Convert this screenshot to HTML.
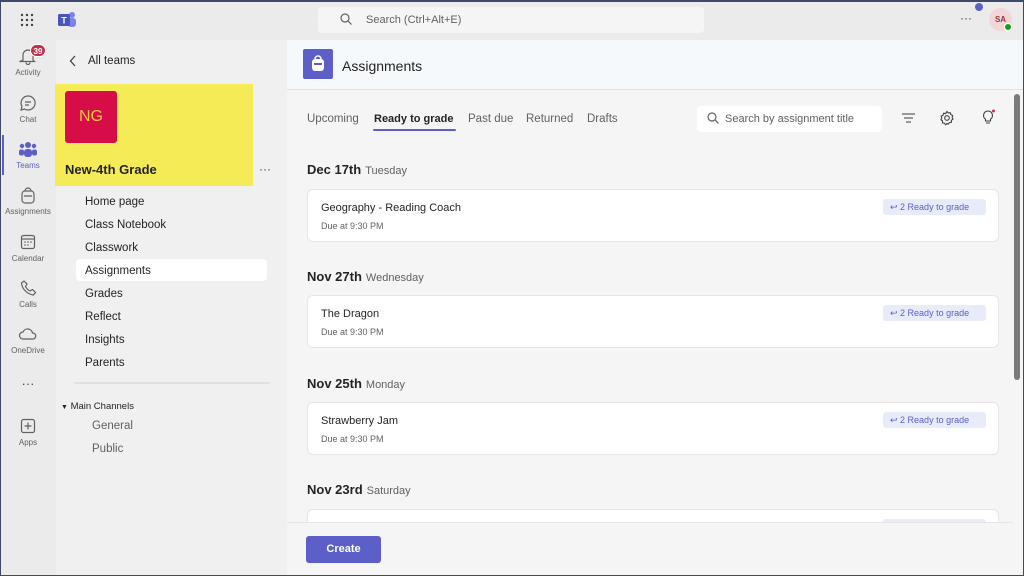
<!DOCTYPE html>
<html><head><style>
*{box-sizing:border-box;margin:0;padding:0}
body{width:1024px;height:576px;overflow:hidden;font-family:"Liberation Sans",sans-serif;background:#ebebeb;position:relative;color:#242424}
.frame{position:absolute;inset:0;border:1px solid #3d4a6a;border-top-width:2px;pointer-events:none;z-index:50}
.abs{position:absolute}
.top{left:0;top:0;width:1024px;height:40px;background:#ebebeb}
.search{left:318px;top:7px;width:386px;height:26px;background:#f5f5f5;border-radius:4px;font-size:11px;color:#616161;padding:7px 0 0 48px}
.rail{left:0;top:40px;width:56px;height:536px;background:#ebebeb}
.ri{position:absolute;left:0;width:56px;text-align:center;font-size:8px;color:#616161}
.ri svg{display:block;margin:0 auto 3px}
.panel{left:56px;top:40px;width:231px;height:536px;background:#f0f0f0}
.hl{left:55px;top:84px;width:198px;height:102px;background:#f5eb57}
.nav{position:absolute;left:85px;font-size:11.5px;color:#242424}
.main{left:287px;top:40px;width:737px;height:536px;background:#f5f5f5}
.hdr{left:287px;top:40px;width:737px;height:50px;background:#f5f9fb;border-bottom:1px solid #e0e0e0}
.tab{position:absolute;top:113px;font-size:11.5px;color:#616161}
.date{position:absolute;left:307px;font-size:13px;font-weight:bold;color:#242424}
.date span{font-weight:normal;font-size:11px;color:#616161;margin-left:4px}
.card{position:absolute;left:307px;width:692px;height:53px;background:#fff;border:1px solid #e6e6e6;border-radius:6px}
.card .t{position:absolute;left:13px;top:12px;font-size:11px;color:#242424}
.card .d{position:absolute;left:13px;top:31px;font-size:9px;color:#616161}
.badge{position:absolute;right:12px;top:9px;width:103px;height:16px;background:#e8ebfa;border-radius:3px;font-size:9px;color:#5b5fc7;padding:3px 0 0 7px}
</style></head><body>
<div class="abs top"></div>
<svg class="abs" style="left:20px;top:13px" width="14" height="14"><g fill="#424242"><circle cx="2" cy="2" r="1.2"/><circle cx="7" cy="2" r="1.2"/><circle cx="12" cy="2" r="1.2"/><circle cx="2" cy="7" r="1.2"/><circle cx="7" cy="7" r="1.2"/><circle cx="12" cy="7" r="1.2"/><circle cx="2" cy="12" r="1.2"/><circle cx="7" cy="12" r="1.2"/><circle cx="12" cy="12" r="1.2"/></g></svg>
<svg class="abs" style="left:57px;top:11px" width="20" height="17"><circle cx="15" cy="4" r="3" fill="#7b83eb"/><rect x="11" y="7" width="8" height="9" rx="3" fill="#7b83eb"/><rect x="1" y="3" width="12" height="12" rx="1.5" fill="#4b53bc"/><text x="7" y="12.5" font-size="9" font-weight="bold" fill="#fff" text-anchor="middle" font-family="Liberation Sans">T</text></svg>
<div class="abs search">Search (Ctrl+Alt+E)</div>
<svg class="abs" style="left:340px;top:13px" width="12" height="12"><circle cx="5" cy="5" r="4" fill="none" stroke="#616161" stroke-width="1.2"/><path d="M8 8l3.5 3.5" stroke="#616161" stroke-width="1.2"/></svg>
<div class="abs" style="left:960px;top:11px;font-size:12px;color:#424242">···</div>
<div class="abs" style="left:975px;top:3px;width:8px;height:8px;border-radius:50%;background:#5b5fc7"></div>
<div class="abs" style="left:989px;top:8px;width:23px;height:23px;border-radius:50%;background:#f3d6d8;font-size:8px;font-weight:bold;color:#8a3a45;text-align:center;line-height:23px">SA</div>
<div class="abs" style="left:1004px;top:23px;width:8px;height:8px;border-radius:50%;background:#13a10e;border:1px solid #fff"></div>

<div class="abs rail"></div>
<div class="ri" style="top:47px"><svg width="18" height="18" viewBox="0 0 18 18"><path d="M4 13V8a5 5 0 0110 0v5l1.5 1.5h-15z M7 15.5a2 2 0 004 0" fill="none" stroke="#616161" stroke-width="1.2"/></svg>Activity</div>
<div class="abs" style="left:30px;top:44px;width:16px;height:13px;border-radius:7px;background:#c4314b;color:#fff;font-size:8px;font-weight:bold;text-align:center;line-height:13px;border:1px solid #fff">39</div>
<div class="ri" style="top:94px"><svg width="18" height="18"><path d="M9 2a7 7 0 11-3.5 13L2 16l1-3.5A7 7 0 019 2z" fill="none" stroke="#616161" stroke-width="1.2"/><path d="M6 8h6M6 11h4" stroke="#616161" stroke-width="1.2"/></svg>Chat</div>
<div class="abs" style="left:2px;top:135px;width:2px;height:40px;background:#5b5fc7"></div>
<div class="ri" style="top:140px;color:#5b5fc7"><svg width="20" height="18"><circle cx="10" cy="5" r="3" fill="#5b5fc7"/><circle cx="4" cy="6" r="2.2" fill="#5b5fc7"/><circle cx="16" cy="6" r="2.2" fill="#5b5fc7"/><rect x="6" y="9" width="8" height="8" rx="3" fill="#5b5fc7"/><rect x="1" y="9.5" width="5" height="6" rx="2" fill="#5b5fc7"/><rect x="14" y="9.5" width="5" height="6" rx="2" fill="#5b5fc7"/></svg>Teams</div>
<div class="ri" style="top:186px"><svg width="18" height="18"><rect x="3" y="5" width="12" height="12" rx="3" fill="none" stroke="#616161" stroke-width="1.2"/><path d="M6 5a3 3 0 016 0M5 10h8" stroke="#616161" stroke-width="1.2" fill="none"/></svg>Assignments</div>
<div class="ri" style="top:233px"><svg width="18" height="18"><rect x="2.5" y="2.5" width="13" height="13" rx="2" fill="none" stroke="#616161" stroke-width="1.2"/><path d="M2.5 6h13" stroke="#616161" stroke-width="1.2"/><g fill="#616161"><circle cx="6" cy="9" r=".8"/><circle cx="9" cy="9" r=".8"/><circle cx="12" cy="9" r=".8"/><circle cx="6" cy="12" r=".8"/><circle cx="9" cy="12" r=".8"/></g></svg>Calendar</div>
<div class="ri" style="top:279px"><svg width="18" height="18"><path d="M5 2l3 3-1.5 2.5c1 2 2.5 3.5 4.5 4.5L13.5 10.5l3 3-2 2.5C8 15 3 10 2.5 4z" fill="none" stroke="#616161" stroke-width="1.2"/></svg>Calls</div>
<div class="ri" style="top:325px"><svg width="20" height="18"><path d="M5 14a3.5 3.5 0 010-7 5 5 0 019.5 1A3 3 0 0115 14z" fill="none" stroke="#616161" stroke-width="1.2"/></svg>OneDrive</div>
<div class="ri" style="top:376px;font-size:13px;color:#424242">···</div>
<div class="ri" style="top:417px"><svg width="18" height="18"><rect x="2.5" y="2.5" width="13" height="13" rx="2" fill="none" stroke="#616161" stroke-width="1.2"/><path d="M9 5.5v7M5.5 9h7" stroke="#616161" stroke-width="1.2"/></svg>Apps</div>

<div class="abs panel"></div>
<svg class="abs" style="left:69px;top:55px" width="8" height="12"><path d="M6 1L1.5 6 6 11" fill="none" stroke="#424242" stroke-width="1.3"/></svg>
<div class="abs" style="left:88px;top:55px;font-size:11.5px;color:#242424">All teams</div>
<div class="abs hl"></div>
<div class="abs" style="left:65px;top:91px;width:52px;height:52px;background:#d60d47;border-radius:3px;color:#f5c842;font-size:16px;text-align:center;line-height:52px">NG</div>
<div class="abs" style="left:65px;top:162px;font-size:13px;font-weight:bold;color:#242424">New-4th Grade</div>
<div class="abs" style="left:259px;top:162px;font-size:12px;color:#424242">···</div>
<div class="nav" style="top:196px">Home page</div>
<div class="nav" style="top:219px">Class Notebook</div>
<div class="nav" style="top:242px">Classwork</div>
<div class="abs" style="left:76px;top:259px;width:191px;height:22px;background:#fff;border-radius:4px"></div>
<div class="nav" style="top:265px">Assignments</div>
<div class="nav" style="top:288px">Grades</div>
<div class="nav" style="top:311px">Reflect</div>
<div class="nav" style="top:334px">Insights</div>
<div class="nav" style="top:357px">Parents</div>
<div class="abs" style="left:74px;top:382px;width:196px;height:2px;background:#e0e0e0"></div>
<div class="abs" style="left:61px;top:401px;font-size:9.5px;color:#242424"><span style="font-size:7px">▼</span> Main Channels</div>
<div class="nav" style="top:420px;left:92px;color:#616161">General</div>
<div class="nav" style="top:443px;left:92px;color:#616161">Public</div>

<div class="abs main"></div>
<div class="abs hdr"></div>
<div class="abs" style="left:303px;top:49px;width:30px;height:30px;background:#5b5fc7;border-radius:2px"></div>
<svg class="abs" style="left:309px;top:54px" width="18" height="20"><rect x="3" y="5" width="12" height="12" rx="3" fill="#fff"/><path d="M6 5a3 3 0 016 0" stroke="#fff" stroke-width="1.5" fill="none"/><rect x="5" y="9" width="8" height="2" fill="#5b5fc7"/></svg>
<div class="abs" style="left:342px;top:58px;font-size:14px;color:#242424">Assignments</div>
<div class="tab" style="left:307px">Upcoming</div>
<div class="tab" style="left:374px;color:#242424;font-weight:bold;font-size:11px">Ready to grade</div>
<div class="abs" style="left:373px;top:129px;width:83px;height:2px;background:#5b5fc7;border-radius:1px"></div>
<div class="tab" style="left:468px">Past due</div>
<div class="tab" style="left:526px">Returned</div>
<div class="tab" style="left:587px">Drafts</div>
<div class="abs" style="left:697px;top:106px;width:185px;height:26px;background:#fff;border-radius:4px;font-size:11px;color:#616161;padding:7px 0 0 28px">Search by assignment title</div>
<svg class="abs" style="left:707px;top:112px" width="12" height="12"><circle cx="5" cy="5" r="4" fill="none" stroke="#616161" stroke-width="1.2"/><path d="M8 8l3.5 3.5" stroke="#616161" stroke-width="1.2"/></svg>
<svg class="abs" style="left:902px;top:113px" width="13" height="10"><path d="M0 1h13M2 5h9M4 9h5" stroke="#616161" stroke-width="1.2"/></svg>
<svg class="abs" style="left:939px;top:110px" width="16" height="16" viewBox="0 0 16 16"><circle cx="8" cy="8" r="2.3" fill="none" stroke="#424242" stroke-width="1.1"/><path d="M8 1.5l1.3 1.5 2-.3.6 1.9 1.8.9-.6 1.9.9 1.7-1.6 1.2v2l-2 .3-1.2 1.6L8 13.5l-1.3 1.3-1.2-1.6-2-.3v-2L1.9 9.7l.9-1.7-.6-1.9 1.8-.9.6-1.9 2 .3z" fill="none" stroke="#424242" stroke-width="1.1"/></svg>
<svg class="abs" style="left:980px;top:108px" width="16" height="18"><path d="M8 3a4.5 4.5 0 00-2.5 8.2V13h5v-1.8A4.5 4.5 0 008 3zM6 15h4" fill="none" stroke="#424242" stroke-width="1.1"/><circle cx="13.5" cy="3" r="1.5" fill="#c4314b"/></svg>
<div class="abs" style="left:1014px;top:94px;width:6px;height:286px;background:#7a7a7a;border-radius:3px"></div>

<div class="date" style="top:162px">Dec 17th<span>Tuesday</span></div>
<div class="card" style="top:189px"><div class="t">Geography - Reading Coach</div><div class="d">Due at 9:30 PM</div><div class="badge">↩ 2 Ready to grade</div></div>
<div class="date" style="top:269px">Nov 27th<span>Wednesday</span></div>
<div class="card" style="top:295px"><div class="t">The Dragon</div><div class="d">Due at 9:30 PM</div><div class="badge">↩ 2 Ready to grade</div></div>
<div class="date" style="top:376px">Nov 25th<span>Monday</span></div>
<div class="card" style="top:402px"><div class="t">Strawberry Jam</div><div class="d">Due at 9:30 PM</div><div class="badge">↩ 2 Ready to grade</div></div>
<div class="date" style="top:482px">Nov 23rd<span>Saturday</span></div>
<div class="card" style="top:509px"><div class="badge"></div></div>
<div class="abs" style="left:287px;top:522px;width:726px;height:54px;background:#f5f5f5;border-top:1px solid #e6e6e6"></div>
<div class="abs" style="left:306px;top:536px;width:75px;height:27px;background:#5b5fc7;border-radius:3px;color:#fff;font-size:11px;font-weight:bold;text-align:center;line-height:27px">Create</div>
<div class="frame"></div>
</body></html>
